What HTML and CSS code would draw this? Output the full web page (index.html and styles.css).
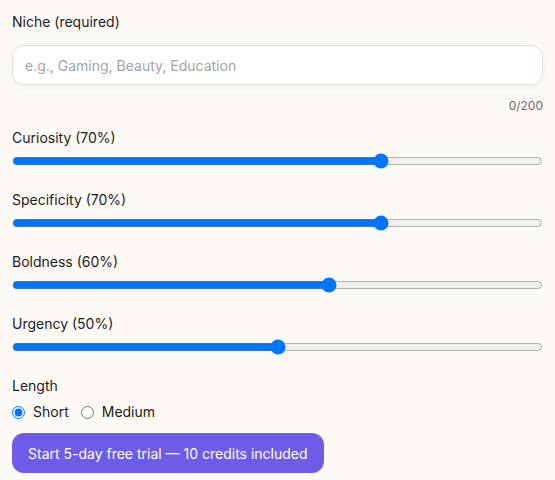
FILE: index.html
```html
<!DOCTYPE html>
<html lang="en">
<head>
<meta charset="utf-8">
<title>Niche form</title>
<link rel="stylesheet" href="styles.css">
</head>
<body>
<form class="form">
  <label class="label" for="niche">Niche (required)</label>
  <input class="text-input" id="niche" type="text" placeholder="e.g., Gaming, Beauty, Education">
  <div class="counter">0/200</div>

  <div class="group first">
    <div class="label">Curiosity (70%)</div>
    <input class="slider" type="range" min="0" max="100" value="70">
  </div>
  <div class="group">
    <div class="label">Specificity (70%)</div>
    <input class="slider" type="range" min="0" max="100" value="70">
  </div>
  <div class="group">
    <div class="label">Boldness (60%)</div>
    <input class="slider" type="range" min="0" max="100" value="60">
  </div>
  <div class="group">
    <div class="label">Urgency (50%)</div>
    <input class="slider" type="range" min="0" max="100" value="50">
  </div>

  <div class="group">
    <div class="label">Length</div>
    <div class="radios">
      <label class="radio"><input type="radio" name="len" checked> <span>Short</span></label>
      <label class="radio"><input type="radio" name="len"> <span>Medium</span></label>
    </div>
  </div>

  <button class="cta" type="button">Start 5-day free trial — 10 credits included</button>
</form>
</body>
</html>
```

FILE: styles.css
```css
html, body {
  margin: 0;
  padding: 0;
  background: #fdfaf6;
}
body {
  font-family: Inter, "Noto Sans", sans-serif;
  font-size: 14px;
  color: #1c1c1c;
}
.form {
  display: flex;
  flex-direction: column;
  padding: 12px 12px 0 12px;
}
.label {
  display: block;
  line-height: 20px;
  font-size: 14px;
  color: #1c1c1c;
}
.text-input {
  margin-top: 13px;
  height: 40px;
  box-sizing: border-box;
  width: 100%;
  border: 1px solid #e6e1da;
  border-radius: 12px;
  background: #fff;
  padding: 0 12px;
  font-family: Inter, "Noto Sans", sans-serif;
  font-size: 14px;
  color: #1c1c1c;
  box-shadow: 0 2px 6px rgba(0,0,0,0.05);
  outline: none;
}
.text-input::placeholder {
  color: #a3a3a3;
}
.counter {
  margin-top: 13px;
  text-align: right;
  font-size: 12px;
  line-height: 16px;
  color: #6b6b6b;
}
.group {
  margin-top: 21px;
  display: flex;
  flex-direction: column;
}
.group.first {
  margin-top: 14px;
}
.slider {
  display: block;
  width: 100%;
  height: 16px;
  margin: 5px 0 0 0;
  accent-color: #0075ff;
}
.radios {
  display: flex;
  align-items: center;
  gap: 12px;
  margin-top: 6px;
  height: 20px;
}
.radio {
  display: flex;
  align-items: center;
  gap: 8px;
  line-height: 20px;
}
.radio input {
  margin: 0;
  width: 13px;
  height: 13px;
}
.cta {
  align-self: flex-start;
  margin-top: 11px;
  height: 40px;
  padding: 0 16px;
  border: none;
  border-radius: 12px;
  background: #6c5ce7;
  color: #fff;
  font-family: Inter, "Noto Sans", sans-serif;
  font-size: 14px;
  font-weight: 400;
}
```
